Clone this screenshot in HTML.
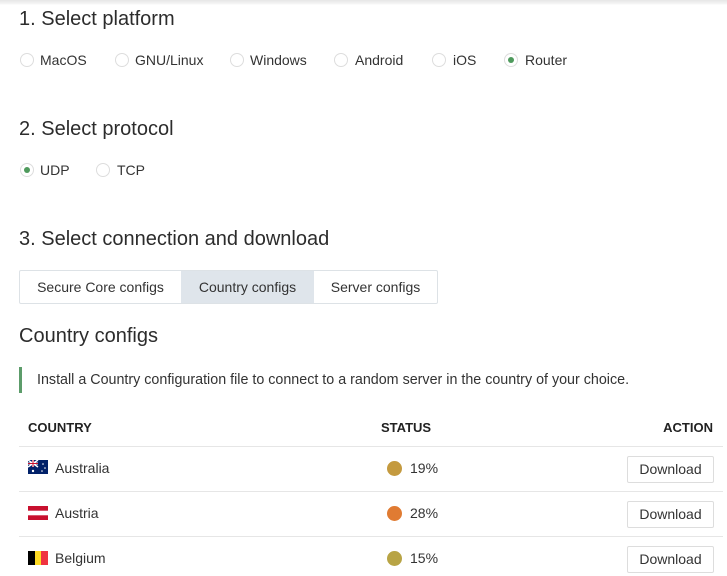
<!DOCTYPE html>
<html><head><style>
body{margin:0;width:727px;height:576px;overflow:hidden;background:#fff;font-family:"Liberation Sans",Arial,sans-serif;color:#333;position:relative}
.a{position:absolute;white-space:nowrap}
.shadow{position:absolute;left:0;top:0;width:727px;height:5px;background:linear-gradient(#e6e6e6,#f4f4f4 70%,#fff)}
h{position:absolute;font-size:20px;color:#2c2c2c;white-space:nowrap}
.r{position:absolute;width:12px;height:12px;border:1px solid #ddd;border-radius:50%;background:#fff}
.r.on::after{content:"";position:absolute;left:3px;top:3px;width:6px;height:6px;border-radius:50%;background:#4e9a5c}
.l{position:absolute;font-size:14px;color:#333;white-space:nowrap}
.tabs{position:absolute;left:19px;top:270px;width:417px;height:32px;border:1px solid #dde2e6;border-radius:2px}
.tab{position:absolute;top:0;height:32px;line-height:32px;font-size:14px;text-align:center;color:#333}
.line{position:absolute;left:19px;width:704px;height:1px;background:#e6e6e6}
.btn{position:absolute;left:627px;width:85px;height:25px;border:1px solid #ddd;border-radius:2px;font-size:14px;text-align:center;line-height:25px;color:#333}
.dot{position:absolute;left:387px;width:15px;height:15px;border-radius:50%}
.th{position:absolute;top:420px;font-size:13px;font-weight:bold;color:#222;white-space:nowrap}
</style></head><body>
<div class="shadow"></div>
<h style="left:19px;top:8px">1. Select platform</h>
<div class="r" style="left:20px;top:53px"></div><div class="l" style="left:40px;top:52px">MacOS</div>
<div class="r" style="left:115px;top:53px"></div><div class="l" style="left:135px;top:52px">GNU/Linux</div>
<div class="r" style="left:230px;top:53px"></div><div class="l" style="left:250px;top:52px">Windows</div>
<div class="r" style="left:334px;top:53px"></div><div class="l" style="left:355px;top:52px">Android</div>
<div class="r" style="left:432px;top:53px"></div><div class="l" style="left:453px;top:52px">iOS</div>
<div class="r on" style="left:504px;top:53px"></div><div class="l" style="left:525px;top:52px">Router</div>
<h style="left:19px;top:118px">2. Select protocol</h>
<div class="r on" style="left:20px;top:163px"></div><div class="l" style="left:40px;top:162px">UDP</div>
<div class="r" style="left:96px;top:163px"></div><div class="l" style="left:117px;top:162px">TCP</div>
<h style="left:19px;top:228px">3. Select connection and download</h>
<div class="tabs">
<div class="tab" style="left:0;width:161px">Secure Core configs</div>
<div class="tab" style="left:161px;width:133px;background:#dfe5eb">Country configs</div>
<div class="tab" style="left:294px;width:123px">Server configs</div>
</div>
<h style="left:19px;top:325px">Country configs</h>
<div class="a" style="left:19px;top:367px;width:3px;height:26px;background:#5c9c6a"></div>
<div class="l" style="left:37px;top:372px;font-size:14.3px">Install a Country configuration file to connect to a random server in the country of your choice.</div>
<div class="th" style="left:28px">COUNTRY</div>
<div class="th" style="left:381px">STATUS</div>
<div class="th" style="right:14px">ACTION</div>
<div class="line" style="top:446px"></div>
<div class="line" style="top:491px"></div>
<div class="line" style="top:536px"></div>
<svg class="a" style="left:28px;top:460px" width="20" height="14" viewBox="0 0 20 14"><rect width="20" height="14" fill="#012169"/><path d="M0 0L10 7M10 0L0 7" stroke="#fff" stroke-width="1.5"/><path d="M5 0V7M0 3.5H10" stroke="#fff" stroke-width="2"/><path d="M5 0V7M0 3.5H10" stroke="#c8102e" stroke-width="1"/><circle cx="5" cy="11" r="1.2" fill="#fff"/><circle cx="15" cy="4" r=".8" fill="#fff"/><circle cx="17" cy="8" r=".8" fill="#fff"/><circle cx="14" cy="11" r=".8" fill="#fff"/></svg>
<div class="l" style="left:55px;top:460px">Australia</div>
<div class="dot" style="top:461px;background:#c49a3f"></div><div class="l" style="left:410px;top:460px">19%</div>
<div class="btn" style="top:456px">Download</div>
<svg class="a" style="left:28px;top:506px" width="20" height="14"><rect width="20" height="14" fill="#c8102e"/><rect y="4.7" width="20" height="4.6" fill="#fff"/></svg>
<div class="l" style="left:55px;top:505px">Austria</div>
<div class="dot" style="top:506px;background:#e07b32"></div><div class="l" style="left:410px;top:505px">28%</div>
<div class="btn" style="top:501px">Download</div>
<svg class="a" style="left:28px;top:551px" width="20" height="14"><rect width="7" height="14" fill="#000"/><rect x="7" width="6" height="14" fill="#fdda24"/><rect x="13" width="7" height="14" fill="#ef3340"/></svg>
<div class="l" style="left:55px;top:550px">Belgium</div>
<div class="dot" style="top:551px;background:#b8a445"></div><div class="l" style="left:410px;top:550px">15%</div>
<div class="btn" style="top:546px">Download</div>
</body></html>
